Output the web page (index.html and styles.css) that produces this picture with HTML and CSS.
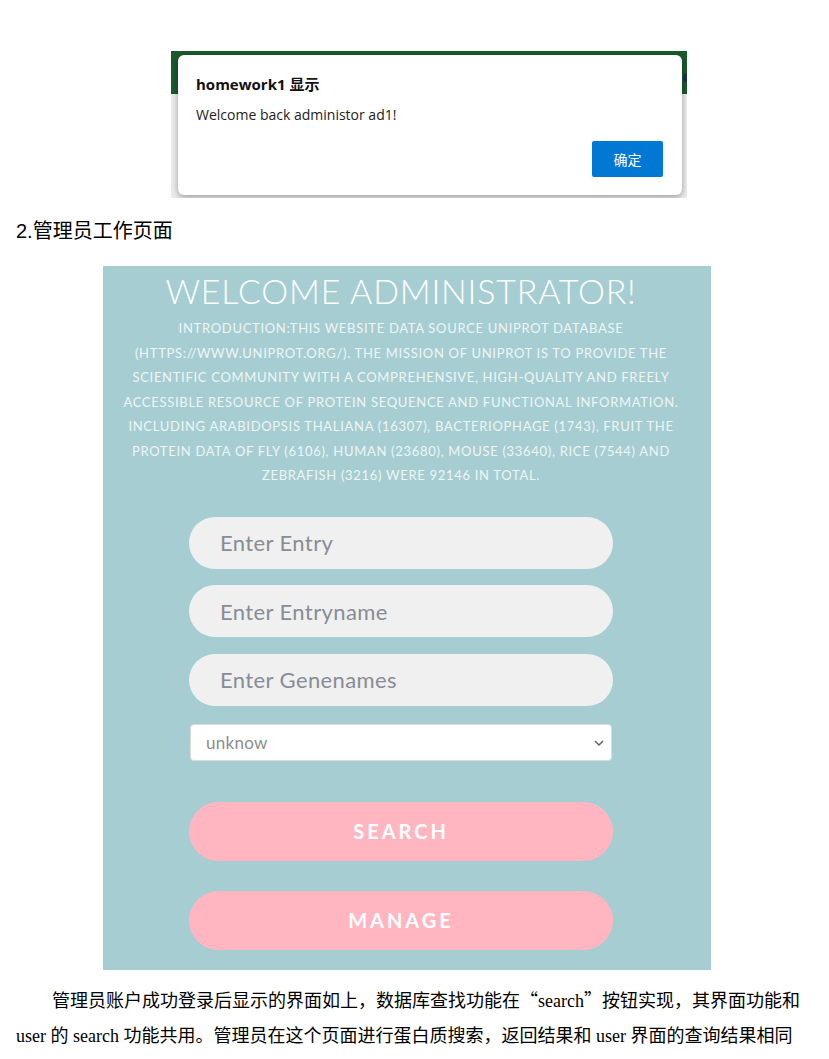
FILE: index.html
```html
<!DOCTYPE html>
<html lang="zh-CN">
<head>
    <meta charset="UTF-8">
    <meta name="viewport" content="width=device-width, initial-scale=1.0">
    <title>管理员工作页面</title>
    <link rel="stylesheet" href="styles.css">
</head>
<body>
    <div class="alert-shot">
        <div class="alert-top"><span class="alert-dot"></span></div>
        <div class="alert-box">
            <h3>homework1 显示</h3>
            <p>Welcome back administor ad1!</p>
            <div class="alert-actions">
                <button class="alert-ok">确定</button>
            </div>
        </div>
    </div>

    <h2 class="doc-heading">2.管理员工作页面</h2>

    <div class="admin-shot">
        <h1>WELCOME ADMINISTRATOR!</h1>
        <p class="intro">INTRODUCTION:THIS WEBSITE DATA SOURCE UNIPROT DATABASE<br>
            (HTTPS://WWW.UNIPROT.ORG/). THE MISSION OF UNIPROT IS TO PROVIDE THE<br>
            SCIENTIFIC COMMUNITY WITH A COMPREHENSIVE, HIGH-QUALITY AND FREELY<br>
            ACCESSIBLE RESOURCE OF PROTEIN SEQUENCE AND FUNCTIONAL INFORMATION.<br>
            INCLUDING ARABIDOPSIS THALIANA (16307), BACTERIOPHAGE (1743), FRUIT THE<br>
            PROTEIN DATA OF FLY (6106), HUMAN (23680), MOUSE (33640), RICE (7544) AND<br>
            ZEBRAFISH (3216) WERE 92146 IN TOTAL.</p>

        <form class="search-form">
            <input type="text" class="field" placeholder="Enter Entry">
            <input type="text" class="field" placeholder="Enter Entryname">
            <input type="text" class="field" placeholder="Enter Genenames">
            <div class="select-wrap">
                <select class="organism">
                    <option>unknow</option>
                </select>
                <svg class="chevron" width="10" height="6" viewBox="0 0 10 6"><path d="M1 1l4 4 4-4" fill="none" stroke="#666" stroke-width="1.5"/></svg>
            </div>
            <button type="button" class="pink-btn search-btn">SEARCH</button>
            <button type="button" class="pink-btn">MANAGE</button>
        </form>
    </div>

    <p class="doc-text">管理员账户成功登录后显示的界面如上，数据库查找功能在<span class="cjk-quote">“</span>search<span class="cjk-quote">”</span>按钮实现，其界面功能和user 的 search 功能共用。管理员在这个页面进行蛋白质搜索，返回结果和 user 界面的查询结果相同</p>
</body>
</html>
```

FILE: styles.css
```css
body {
    margin: 0;
    padding: 0 16px;
    background-color: #FFFFFF;
    color: #000000;
    font-family: "Liberation Sans", "Noto Sans CJK SC", sans-serif;
}

/* alert screenshot */
.alert-shot {
    position: relative;
    width: 516px;
    height: 147px;
    margin: 51px 0 0 155px;
    background-color: #ececec;
    overflow: hidden;
}
.alert-top {
    height: 43px;
    background-color: #1a5b2d;
}
.alert-dot {
    position: absolute;
    right: -6px;
    top: 22px;
    width: 10px;
    height: 10px;
    border-radius: 50%;
    background-color: #1d2f5a;
}
.alert-box {
    position: absolute;
    left: 7px;
    top: 4px;
    width: 504px;
    height: 140px;
    box-sizing: border-box;
    padding: 19px 19px 0 18px;
    background-color: #FFFFFF;
    border-radius: 6px;
    box-shadow: 0 2px 6px rgba(0, 0, 0, 0.35);
    font-family: "Open Sans", "Noto Sans CJK SC", sans-serif;
}
.alert-box h3 {
    margin: 0;
    font-size: 15px;
    line-height: 20px;
    font-weight: 700;
    color: #111111;
}
.alert-box p {
    margin: 12px 0 0;
    font-size: 14px;
    line-height: 18px;
    color: #222222;
}
.alert-actions {
    display: flex;
    justify-content: flex-end;
    margin-top: 17px;
}
.alert-ok {
    width: 71px;
    height: 36px;
    border: none;
    border-radius: 2px;
    background-color: #0078d4;
    color: #FFFFFF;
    font-family: "Noto Sans CJK SC", sans-serif;
    font-size: 14px;
}

.doc-heading {
    margin: 19px 0 0;
    font-size: 20px;
    line-height: 28px;
    font-weight: 400;
}

/* admin page screenshot */
.admin-shot {
    width: 608px;
    height: 704px;
    box-sizing: border-box;
    margin: 21px 0 0 87px;
    padding: 5px 12px 0 0;
    background-color: #a6ced2;
    color: #FFFFFF;
    font-family: Lato, "Open Sans", sans-serif;
    text-align: center;
}
.admin-shot h1 {
    margin: 0;
    font-size: 34px;
    line-height: 40px;
    font-weight: 300;
    letter-spacing: 0.8px;
}
.intro {
    margin: 5px 0 0;
    font-size: 13px;
    line-height: 24.5px;
    letter-spacing: 0.7px;
    color: #eef5f5;
}
.search-form {
    display: flex;
    flex-direction: column;
    width: 424px;
    margin: 29px auto 0;
}
.field {
    height: 52px;
    margin-bottom: 16.5px;
    padding: 0 0 0 31px;
    border: none;
    border-radius: 26px;
    background-color: #f0f0f0;
    font-family: Lato, sans-serif;
    font-size: 22px;
    letter-spacing: 0.4px;
    outline: none;
}
.field::placeholder {
    color: #878c95;
}
.select-wrap {
    position: relative;
    margin: 1.5px 1px 0;
}
.organism {
    width: 100%;
    height: 37px;
    padding: 0 0 0 15px;
    border: 1px solid #d9dddd;
    border-radius: 4px;
    background-color: #FFFFFF;
    color: #8d8d8d;
    font-family: Lato, sans-serif;
    font-size: 17px;
    letter-spacing: 0.3px;
    appearance: none;
}
.chevron {
    position: absolute;
    right: 8px;
    top: 16px;
}
.pink-btn {
    height: 59px;
    margin-top: 30px;
    border: none;
    border-radius: 30px;
    background-color: #ffb6c1;
    color: #FFFFFF;
    font-family: Lato, sans-serif;
    font-size: 20px;
    font-weight: 700;
    letter-spacing: 3px;
}
.search-btn {
    margin-top: 41px;
}

.doc-text {
    margin: 12px 13px 0 0;
    font-family: "Liberation Serif", "Noto Sans CJK SC", serif;
    font-size: 18px;
    line-height: 35px;
    text-indent: 2em;
    text-align: justify;
}
.cjk-quote {
    font-family: "Noto Sans CJK SC", sans-serif;
}
```
